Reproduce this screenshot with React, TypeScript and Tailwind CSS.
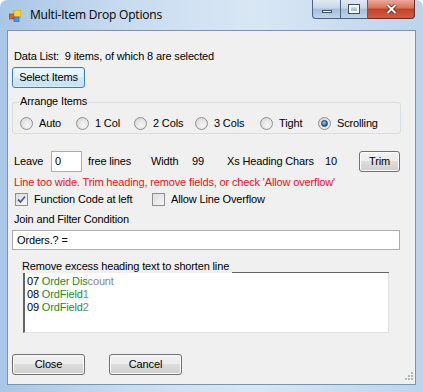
import React from "react";

function Radio({ checked }: { checked?: boolean }) {
  return (
    <span className="relative inline-block w-[13px] h-[13px] rounded-full border border-[#8f8f8f] bg-[radial-gradient(circle_at_60%_65%,#f6f6f6,#d4d4d4)] shrink-0">
      {checked && (
        <span className="absolute left-[2px] top-[2px] w-[7px] h-[7px] rounded-full bg-[radial-gradient(circle_at_40%_35%,#9fd3f7,#1b5d9b_70%)] border border-[#1d3b61]" />
      )}
    </span>
  );
}

function Check({ checked }: { checked?: boolean }) {
  return (
    <span className="relative inline-flex items-center justify-center w-[13px] h-[13px] border border-[#8f8f8f] bg-[linear-gradient(135deg,#dcdcdc,#f7f7f7)] shrink-0">
      {checked && (
        <svg width="9" height="9" viewBox="0 0 9 9">
          <path d="M1 4.5 L3.5 7 L8 1.5" stroke="#4a5f97" strokeWidth="1.8" fill="none" />
        </svg>
      )}
    </span>
  );
}

function Btn({ children, w, focus }: { children: React.ReactNode; w: string; focus?: boolean }) {
  return (
    <button
      className={
        "h-[21px] rounded-[3px] border text-[11px] leading-[13px] text-black flex items-center justify-center tracking-[-0.15px] " +
        w +
        (focus
          ? " border-[#3c7fb1] bg-[linear-gradient(#eef7fc_0%,#e3f1fa_50%,#d0e9f7_50%,#c4e2f4_100%)] shadow-[inset_0_0_0_1px_#d8eefb]"
          : " border-[#707070] bg-[linear-gradient(#f2f2f2_0%,#ebebeb_50%,#dddddd_50%,#cfcfcf_100%)] shadow-[inset_0_0_0_1px_#fcfcfc]")
      }
    >
      {children}
    </button>
  );
}

export default function App() {
  return (
    <div className="w-[423px] h-[392px] relative overflow-hidden rounded-t-[7px] bg-[linear-gradient(90deg,#a9c6e6,#c8dcf0_30%,#d9e7f5_60%,#bcd4ec)] font-['Liberation_Sans',Arial,sans-serif] text-black">
      {/* title bar */}
      <div className="h-[30px] flex items-start relative">
        <svg className="ml-[9px] mt-[10px]" width="12" height="12" viewBox="0 0 12 12">
          <rect x="0" y="4" width="5" height="5" fill="#e0602a" stroke="#9a3b14" strokeWidth="0.6" />
          <rect x="5" y="0" width="7" height="7" fill="#f8d24a" stroke="#b58a16" strokeWidth="0.6" />
          <rect x="5" y="7" width="5" height="5" fill="#5b8fd6" stroke="#2d5b9c" strokeWidth="0.6" />
        </svg>
        <span className="ml-[9px] mt-[7px] text-[12px] leading-[16px] font-['Open_Sans',sans-serif] tracking-[-0.2px] text-black">
          Multi-Item Drop Options
        </span>
        <div className="absolute right-[8px] top-0 flex h-[19px]">
          <div className="w-[29px] h-[19px] rounded-bl-[4px] border border-[#4a6383] border-t-0 bg-[linear-gradient(#dfe9f5_0%,#c6d6ea_45%,#a7bedb_50%,#bfd4ea_100%)] flex items-center justify-center">
            <span className="w-[10px] h-[3px] bg-white border border-[#3a4f6a] mt-[4px]" />
          </div>
          <div className="w-[27px] h-[19px] border-b border-r border-[#4a6383] bg-[linear-gradient(#dfe9f5_0%,#c6d6ea_45%,#a7bedb_50%,#bfd4ea_100%)] flex items-center justify-center">
            <span className="w-[10px] h-[8px] border-[2px] border-white outline outline-1 outline-[#3a4f6a]" />
          </div>
          <div className="w-[47px] h-[19px] rounded-br-[4px] border-b border-r border-[#6b2a20] bg-[linear-gradient(#e9a99a_0%,#d9705c_45%,#c4402a_50%,#d0603f_100%)] flex items-center justify-center">
            <svg width="11" height="10" viewBox="0 0 11 10">
              <path d="M1.5 1 L9.5 9 M9.5 1 L1.5 9" stroke="#3e1a14" strokeWidth="3.4" />
              <path d="M1.5 1 L9.5 9 M9.5 1 L1.5 9" stroke="#ffffff" strokeWidth="2" />
            </svg>
          </div>
        </div>
      </div>

      {/* client area */}
      <div className="ml-[7px] w-[409px] h-[355px] border border-[#7d94b0] bg-[#f0f0f0] relative">
        <div className="flex flex-col pt-[19px] text-[11px] leading-[13px] tracking-[-0.15px]">
          <div className="ml-[6px] h-[14px] whitespace-pre">Data List:  9 items, of which 8 are selected</div>

          <div className="ml-[4px] mt-[3px]">
            <Btn w="w-[73px]" focus>Select Items</Btn>
          </div>

          {/* group */}
          <div className="ml-[4px] mt-[14px] w-[389px] h-[32px] border border-[#d5dfe5] rounded-[3px] relative">
            <span className="absolute left-[6px] top-[-8px] px-[1px] bg-[#f0f0f0] leading-[13px]">Arrange Items</span>
            <div className="flex items-center pt-[14px] pl-[7px]">
              <div className="w-[56px] flex items-center gap-[6px]"><Radio /><span>Auto</span></div>
              <div className="w-[58px] flex items-center gap-[6px]"><Radio /><span>1 Col</span></div>
              <div className="w-[61px] flex items-center gap-[6px]"><Radio /><span>2 Cols</span></div>
              <div className="w-[65px] flex items-center gap-[6px]"><Radio /><span>3 Cols</span></div>
              <div className="w-[58px] flex items-center gap-[6px]"><Radio /><span>Tight</span></div>
              <div className="flex items-center gap-[6px]"><Radio checked /><span>Scrolling</span></div>
            </div>
          </div>

          {/* leave row */}
          <div className="flex items-center mt-[16px] ml-[6px] h-[22px]">
            <span className="w-[37px]">Leave</span>
            <div className="w-[31px] h-[21px] bg-white border border-[#abadb3] pl-[3px] flex items-center">0</div>
            <span className="ml-[6px] w-[63px]">free lines</span>
            <span className="w-[41px]">Width</span>
            <span className="w-[35px]">99</span>
            <span className="w-[98px]">Xs Heading Chars</span>
            <span className="w-[34px]">10</span>
            <Btn w="w-[41px]">Trim</Btn>
          </div>

          <div className="ml-[6px] mt-[4px] text-[#e8101c]">Line too wide. Trim heading, remove fields, or check 'Allow overflow'</div>

          <div className="flex items-center ml-[7px] mt-[3px] h-[15px]">
            <div className="w-[137px] flex items-center gap-[6px]"><Check checked /><span>Function Code at left</span></div>
            <div className="flex items-center gap-[6px]"><Check /><span>Allow Line Overflow</span></div>
          </div>

          <div className="ml-[6px] mt-[6px]">Join and Filter Condition</div>

          <div className="ml-[4px] mt-[4px] w-[388px] h-[20px] bg-white border border-[#abadb3] pl-[4px] flex items-center">Orders.? =</div>

          <div className="ml-[14px] mt-[10px] w-[367px] flex items-end h-[13px]">
            <span>Remove excess heading text to shorten line</span>
            <span className="ml-[3px] flex-1 border-t-[2px] border-[#646464] mb-[-1px]" />
          </div>

          <div className="ml-[15px] w-[366px] h-[60px] bg-white border-l-[2px] border-l-[#646464] border-r border-r-[#e3e3e3] border-b border-b-[#e3e3e3] pl-[2px] pt-[2px]">
            <div><span>07 </span><span className="text-[#1f8a1f]">Order Dis</span><span className="text-[#8a8a8a]">count</span></div>
            <div><span>08 </span><span className="text-[#1f8a1f]">OrdField</span><span className="text-[#5f9a5f]">1</span></div>
            <div><span>09 </span><span className="text-[#1f8a1f]">OrdField</span><span className="text-[#808080]">2</span></div>
          </div>

          <div className="flex ml-[4px] mt-[21px] gap-[24px]">
            <Btn w="w-[73px]">Close</Btn>
            <Btn w="w-[73px]">Cancel</Btn>
          </div>
        </div>
        {/* resize grip */}
        <svg className="absolute right-[2px] bottom-[2px]" width="10" height="10" viewBox="0 0 10 10">
          {[[8, 0], [8, 3], [5, 3], [8, 6], [5, 6], [2, 6]].map(([x, y], i) => (
            <g key={i}>
              <rect x={x + 1} y={y + 1} width="2" height="2" fill="#ffffff" />
              <rect x={x} y={y} width="2" height="2" fill="#b8b8b8" />
            </g>
          ))}
        </svg>
      </div>
    </div>
  );
}
